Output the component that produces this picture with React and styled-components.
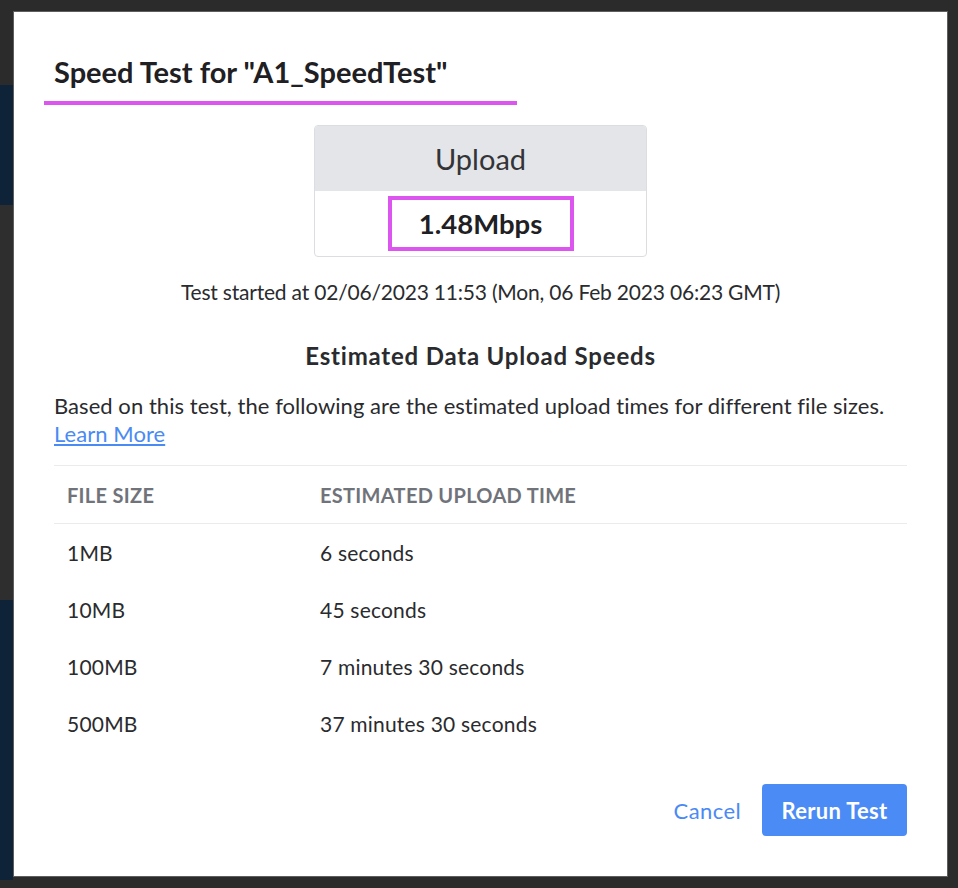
import React from "react";
import styled, { createGlobalStyle } from "styled-components";

const Global = createGlobalStyle`
  html, body { margin: 0; padding: 0; }
  body {
    width: 958px;
    height: 888px;
    overflow: hidden;
    font-family: Lato, "Open Sans", "Liberation Sans", sans-serif;
    background-color: #2b2b2b;
    background-image: linear-gradient(
      to bottom,
      #2b2b2b 0px, #2b2b2b 85px,
      #0e2338 85px, #0e2338 205px,
      #2e2e2e 205px, #2e2e2e 600px,
      #0e2338 600px, #0e2338 880px,
      #2b2b2b 880px
    );
    background-size: 13px 100%;
    background-repeat: no-repeat;
  }
`;

const Backdrop = styled.div`
  padding: 11px 10px 11px 13px;
`;

const Modal = styled.div`
  width: 935px;
  height: 866px;
  box-sizing: border-box;
  background: #ffffff;
  border: 1px solid #5e5e5e;
  padding: 0 40px 0 40px;
  display: flex;
  flex-direction: column;
  color: #222326;
`;

const TitleBlock = styled.div`
  padding-top: 43px;
`;

const Title = styled.h2`
  margin: 0;
  font-size: 29px;
  font-weight: 700;
  line-height: 34px;
  color: #1f2023;
`;

const Mark = styled.div`
  width: 473px;
  height: 4px;
  margin: 12px 0 0 -10px;
  background: #dd55ef;
`;

const Card = styled.div`
  align-self: center;
  margin-top: 20px;
  width: 333px;
  height: 132px;
  box-sizing: border-box;
  border: 1px solid #dcdde0;
  border-radius: 4px;
  overflow: hidden;
  display: flex;
  flex-direction: column;
`;

const CardHead = styled.div`
  height: 65px;
  background: #e4e5e8;
  display: flex;
  align-items: center;
  justify-content: center;
  font-size: 29px;
  color: #333438;
`;

const CardBody = styled.div`
  flex: 1;
  display: flex;
  align-items: center;
  justify-content: center;
`;

const Speed = styled.div`
  width: 186px;
  height: 55px;
  box-sizing: border-box;
  border: 4px solid #dd55ef;
  display: flex;
  align-items: center;
  justify-content: center;
  font-size: 27.5px;
  font-weight: 700;
  color: #1f2023;
`;

const Centered = styled.p`
  margin: ${(p) => p.$mt}px 0 0;
  text-align: center;
  font-size: ${(p) => p.$size}px;
  font-weight: ${(p) => p.$weight};
  letter-spacing: ${(p) => p.$ls}px;
  line-height: 28px;
  color: #2a2b2e;
`;

const Para = styled.p`
  margin: 22px 0 0;
  font-size: 22px;
  letter-spacing: 0.05px;
  line-height: 28px;
  color: #2a2b2e;
`;

const Link = styled.a`
  color: #4a8af4;
  text-decoration: underline;
  cursor: pointer;
`;

const Table = styled.div`
  margin-top: 17px;
  border-top: 1px solid #ebebed;
`;

const Row = styled.div`
  display: grid;
  grid-template-columns: 253px 1fr;
  align-items: center;
  height: 57px;
  padding-left: 13px;
  border-bottom: ${(p) => (p.$head ? "1px solid #ebebed" : "none")};
  font-size: ${(p) => (p.$head ? 20 : 21)}px;
  letter-spacing: ${(p) => (p.$head ? 0.3 : 0.2)}px;
  font-weight: ${(p) => (p.$head ? 700 : 400)};
  color: ${(p) => (p.$head ? "#70737a" : "#2a2b2e")};
  text-transform: ${(p) => (p.$head ? "uppercase" : "none")};
`;

const Footer = styled.div`
  margin-top: auto;
  margin-bottom: 40px;
  display: flex;
  justify-content: flex-end;
  align-items: center;
  gap: 21px;
`;

const TextButton = styled.button`
  border: none;
  background: none;
  padding: 0;
  font-family: inherit;
  font-size: 22px;
  letter-spacing: 0.4px;
  color: #4a8af4;
  cursor: pointer;
`;

const PrimaryButton = styled.button`
  width: 145px;
  height: 52px;
  padding: 0;
  border: none;
  border-radius: 4px;
  background: #4b8bf5;
  color: #ffffff;
  font-family: inherit;
  font-size: 22px;
  letter-spacing: 0.3px;
  font-weight: 700;
  cursor: pointer;
`;

const rows = [
  ["1MB", "6 seconds"],
  ["10MB", "45 seconds"],
  ["100MB", "7 minutes 30 seconds"],
  ["500MB", "37 minutes 30 seconds"],
];

export default function App() {
  return (
    <>
      <Global />
      <Backdrop>
        <Modal>
          <TitleBlock>
            <Title>Speed Test for "A1_SpeedTest"</Title>
            <Mark />
          </TitleBlock>
          <Card>
            <CardHead>Upload</CardHead>
            <CardBody>
              <Speed>1.48Mbps</Speed>
            </CardBody>
          </Card>
          <Centered $mt={21} $size={21} $weight={400} $ls={-0.2}>
            Test started at 02/06/2023 11:53 (Mon, 06 Feb 2023 06:23 GMT)
          </Centered>
          <Centered $mt={36} $size={24} $weight={700} $ls={0.8}>
            Estimated Data Upload Speeds
          </Centered>
          <Para>
            Based on this test, the following are the estimated upload times for different file sizes.
            <br />
            <Link>Learn More</Link>
          </Para>
          <Table>
            <Row $head>
              <span>File Size</span>
              <span>Estimated Upload Time</span>
            </Row>
            {rows.map(([size, time]) => (
              <Row key={size}>
                <span>{size}</span>
                <span>{time}</span>
              </Row>
            ))}
          </Table>
          <Footer>
            <TextButton>Cancel</TextButton>
            <PrimaryButton>Rerun Test</PrimaryButton>
          </Footer>
        </Modal>
      </Backdrop>
    </>
  );
}
